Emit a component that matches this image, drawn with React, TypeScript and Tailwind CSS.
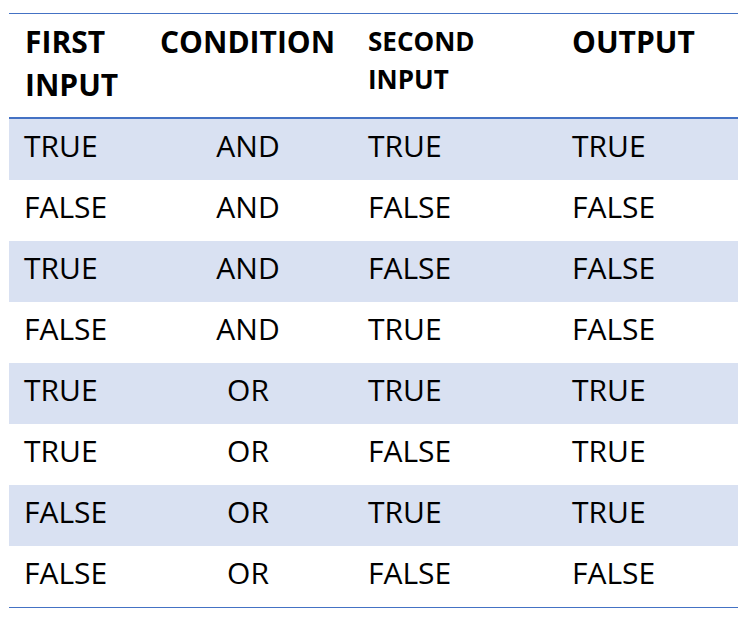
const ROWS: [string, string, string, string][] = [
  ["TRUE", "AND", "TRUE", "TRUE"],
  ["FALSE", "AND", "FALSE", "FALSE"],
  ["TRUE", "AND", "FALSE", "FALSE"],
  ["FALSE", "AND", "TRUE", "FALSE"],
  ["TRUE", "OR", "TRUE", "TRUE"],
  ["TRUE", "OR", "FALSE", "TRUE"],
  ["FALSE", "OR", "TRUE", "TRUE"],
  ["FALSE", "OR", "FALSE", "FALSE"],
];

const COLS = "grid grid-cols-[135px_208px_204px_182px]";

export default function App() {
  return (
    <div
      className="w-[748px] h-[624px] bg-white pt-[13px] pl-[9px] text-black"
      style={{ fontFamily: '"Open Sans", "Noto Sans", sans-serif' }}
    >
      <div className="w-[729px] border-t border-b border-[#4472c4]">
        {/* header */}
        <div className={`${COLS} h-[105px] border-b-2 border-[#4472c4] font-bold`}>
          <div className="pl-4 pt-[6px] text-[30px] leading-[43px]">
            FIRST
            <br />
            INPUT
          </div>
          <div className="pl-4 pt-[6px] text-[30px] leading-[43px]">CONDITION</div>
          <div className="pl-4 pt-[8px] text-[26px] leading-[38px]">
            SECOND
            <br />
            INPUT
          </div>
          <div className="pl-4 pt-[6px] text-[30px] leading-[43px]">OUTPUT</div>
        </div>

        {/* body */}
        {ROWS.map((r, i) => (
          <div
            key={i}
            className={`${COLS} h-[61px] items-center pb-[8px] text-[30px] ${
              i % 2 === 0 ? "bg-[#d9e1f2]" : "bg-white"
            }`}
          >
            <div className="pl-[15px]">{r[0]}</div>
            <div className="text-center">{r[1]}</div>
            <div className="pl-4">{r[2]}</div>
            <div className="pl-4">{r[3]}</div>
          </div>
        ))}
      </div>
    </div>
  );
}
